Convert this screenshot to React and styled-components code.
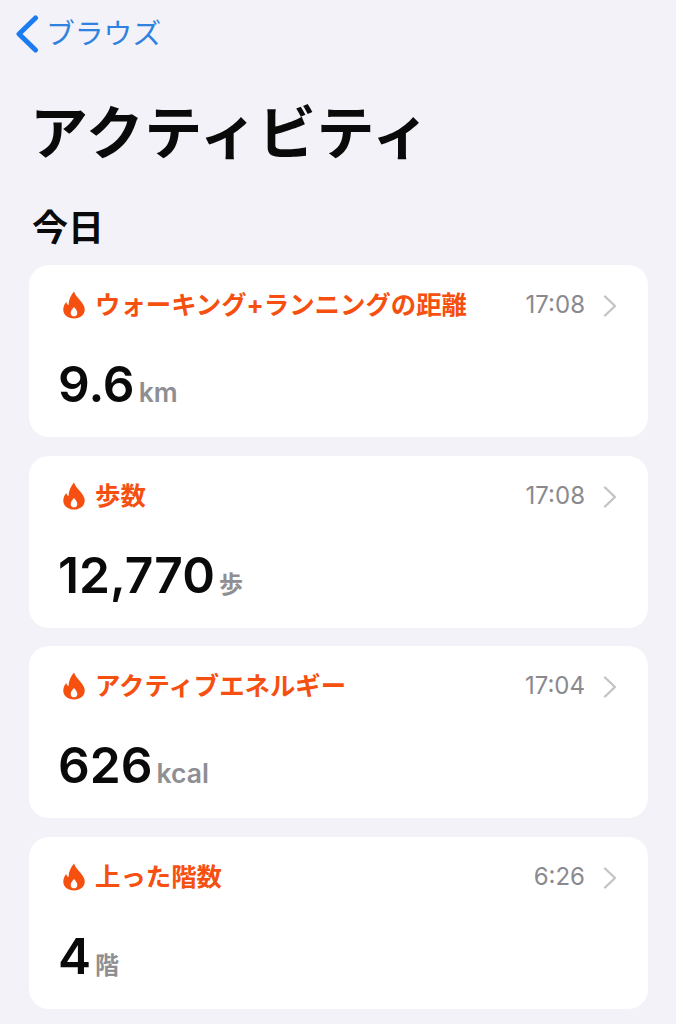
import React from 'react';
import styled, { createGlobalStyle } from 'styled-components';

const GlobalStyle = createGlobalStyle`
  html, body {
    margin: 0;
    padding: 0;
    background: #fff;
  }
  body {
    font-family: Inter, "Noto Sans CJK JP", sans-serif;
  }
`;

const Page = styled.div`
  width: 676px;
  height: 1024px;
  overflow: hidden;
  box-sizing: border-box;
  background: #f2f2f8;
  padding: 12px 28px 0 29px;
`;

const BackLink = styled.div`
  display: flex;
  align-items: center;
  height: 44px;
  margin-left: -14px;
  gap: 7px;
  color: #2f82e0;
  font-size: 28.8px;
  line-height: 46px;
`;

const Title = styled.h1`
  margin: 41px 0 0 1px;
  font-size: 58px;
  line-height: 72px;
  font-weight: 700;
  letter-spacing: 0.6px;
  color: #0a0a0a;
`;

const SectionTitle = styled.h2`
  margin: 37px 0 15px 3px;
  font-size: 36px;
  line-height: 44px;
  font-weight: 700;
  color: #0a0a0a;
`;

const CardList = styled.div`
  display: flex;
  flex-direction: column;
  gap: 18.7px;
`;

const Card = styled.div`
  box-sizing: border-box;
  height: 172px;
  background: #fff;
  border-radius: 20px;
  padding: 22px 31px 0 29px;
`;

const CardHead = styled.div`
  display: flex;
  align-items: center;
  height: 36px;
`;

const FlameBox = styled.span`
  display: flex;
  margin-left: 5px;
`;

const Label = styled.span`
  margin-left: 10px;
  flex: 1;
  font-size: 25.4px;
  line-height: 36px;
  font-weight: 700;
  color: #f5500f;
  white-space: nowrap;
`;

const Time = styled.span`
  font-size: 24px;
  line-height: 38px;
  color: #8a8a8e;
`;

const ChevronBox = styled.span`
  display: flex;
  margin: 2px 0 0 18px;
`;

const ValueRow = styled.div`
  display: flex;
  align-items: baseline;
  margin-top: 27px;
  gap: 4px;
`;

const Value = styled.span`
  font-size: 49.7px;
  line-height: 68px;
  font-weight: 600;
  color: #0a0a0a;
`;

const Unit = styled.span`
  font-size: ${props => props.$cjk ? '24px' : '26.5px'};
  font-weight: 600;
  color: #8e8e93;
`;

const Flame = () => (
  <svg width="22" height="28" viewBox="0 0 24 30">
    <path
      fill="#f5500f"
      fillRule="evenodd"
      d="M12 0.3C13.6 4.6 16.2 7 19 10.4C21.9 13.9 23.7 16.6 23.7 20C23.7 26 18.8 29.8 12 29.8C5.2 29.8 0.3 26 0.3 20C0.3 16.4 1.8 13.8 3.6 11.6C4 13.4 4.8 14.6 6 15C6.2 9.6 8.4 4.6 12 0.3ZM12 17.2C10 19.6 8.4 21.6 8.4 23.9C8.4 26.1 10 27.3 12 27.3C14 27.3 15.6 26.1 15.6 23.9C15.6 21.6 14 19.6 12 17.2Z"
    />
  </svg>
);

const Chevron = () => (
  <svg width="14" height="22" viewBox="0 0 14 22">
    <path d="M2 1.5L12 11L2 20.5" fill="none" stroke="#c4c4c7" strokeWidth="2.4" strokeLinecap="round" strokeLinejoin="round" />
  </svg>
);

const BackChevron = () => (
  <svg width="24" height="38" viewBox="0 0 24 38">
    <path d="M20.5 3L4 19L20.5 35" fill="none" stroke="#1a7cf0" strokeWidth="5" strokeLinecap="round" strokeLinejoin="round" />
  </svg>
);

const items = [
  { label: 'ウォーキング+ランニングの距離', time: '17:08', value: '9.6', unit: 'km' },
  { label: '歩数', time: '17:08', value: '12,770', unit: '歩', cjk: true },
  { label: 'アクティブエネルギー', time: '17:04', value: '626', unit: 'kcal' },
  { label: '上った階数', time: '6:26', value: '4', unit: '階', cjk: true },
];

const App = () => (
  <Page>
    <GlobalStyle />
    <BackLink>
      <BackChevron />
      <span>ブラウズ</span>
    </BackLink>
    <Title>アクティビティ</Title>
    <SectionTitle>今日</SectionTitle>
    <CardList>
      {items.map(item => (
        <Card key={item.label}>
          <CardHead>
            <FlameBox><Flame /></FlameBox>
            <Label>{item.label}</Label>
            <Time>{item.time}</Time>
            <ChevronBox><Chevron /></ChevronBox>
          </CardHead>
          <ValueRow>
            <Value>{item.value}</Value>
            <Unit $cjk={item.cjk}>{item.unit}</Unit>
          </ValueRow>
        </Card>
      ))}
    </CardList>
  </Page>
);

export default App;
